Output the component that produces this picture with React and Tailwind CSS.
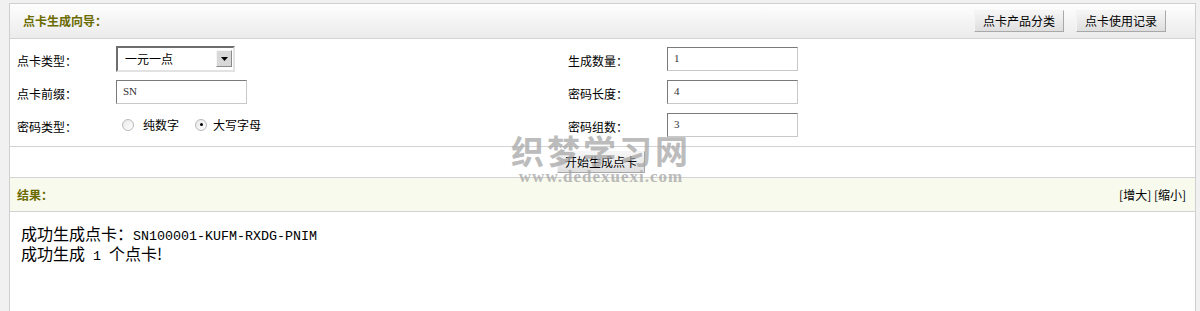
import React from "react";

const cjk = { fontFamily: '"Noto Sans CJK SC", "Liberation Sans", sans-serif' };
const serif = { fontFamily: '"Liberation Serif", "Noto Sans CJK SC", serif' };
const mono = { fontFamily: '"Liberation Mono", monospace' };

function GrayButton({ children, className = "" }) {
  return (
    <button
      className={`h-[22px] border border-t-[#f4f4f4] border-l-[#f4f4f4] border-r-[#a8a8a8] border-b-[#a8a8a8] bg-gradient-to-b from-[#f6f6f6] to-[#dedede] text-[12px] leading-none text-black ${className}`}
      style={cjk}
    >
      {children}
    </button>
  );
}

function TextBox({ value }) {
  return (
    <div
      className="flex h-[24px] w-[131px] items-center border border-t-[#7a7a7a] border-l-[#7a7a7a] border-r-[#c8c8c8] border-b-[#c8c8c8] bg-white px-[6px] text-[11px] text-[#333]"
      style={serif}
    >
      {value}
    </div>
  );
}

function Label({ children }) {
  return (
    <span className="text-[12px] text-black" style={cjk}>
      {children}
    </span>
  );
}

function Radio({ checked }) {
  return (
    <span className="relative inline-block h-[12px] w-[12px] rounded-full border border-[#b9b9b9] bg-gradient-to-br from-[#e8e8e8] to-white">
      {checked && (
        <span className="absolute left-[3.5px] top-[3.5px] h-[3px] w-[3px] rounded-full bg-black" />
      )}
    </span>
  );
}

export default function App() {
  return (
    <div className="h-[311px] w-[1200px] overflow-hidden bg-[#f1f1f1] pl-[9px] pr-[4px] pt-[3px]" style={cjk}>
      <div className="relative h-[320px] border border-[#cfcfcf] bg-white">
        {/* header */}
        <div className="flex h-[35px] items-center justify-between border-b border-[#d3d3d3] bg-gradient-to-b from-[#fefefe] to-[#ebebeb] pl-[13px] pr-[29px]">
          <span className="text-[12px] font-bold text-[#6b6b00]">点卡生成向导：</span>
          <div className="flex gap-[12px] pb-[1px]">
            <GrayButton className="w-[90px]">点卡产品分类</GrayButton>
            <GrayButton className="w-[90px]">点卡使用记录</GrayButton>
          </div>
        </div>

        {/* form */}
        <div className="border-b border-[#d3d3d3] pb-[5px] pl-[7px] pt-[3px]">
          <div className="flex h-[33px] items-center">
            <div className="flex w-[551px] items-center">
              <div className="w-[99px]"><Label>点卡类型：</Label></div>
              <div className="flex h-[26px] w-[119px] items-center justify-between border-2 border-t-[#6e6e6e] border-l-[#6e6e6e] border-r-[#e2e2e2] border-b-[#e2e2e2] bg-white pl-[7px] pr-[1px]">
                <span className="text-[12px] text-black">一元一点</span>
                <span className="flex h-[17px] w-[16px] items-center justify-center border border-t-[#f6f6f6] border-l-[#f6f6f6] border-r-[#8a8a8a] border-b-[#8a8a8a] bg-[#d8d8d8]">
                  <svg width="7" height="4" viewBox="0 0 7 4">
                    <path d="M0 0h7L3.5 4z" fill="#000" />
                  </svg>
                </span>
              </div>
            </div>
            <div className="w-[99px]"><Label>生成数量：</Label></div>
            <TextBox value="1" />
          </div>
          <div className="flex h-[33px] items-center">
            <div className="flex w-[551px] items-center">
              <div className="w-[99px]"><Label>点卡前缀：</Label></div>
              <TextBox value="SN" />
            </div>
            <div className="w-[99px]"><Label>密码长度：</Label></div>
            <TextBox value="4" />
          </div>
          <div className="flex h-[33px] items-center">
            <div className="flex w-[551px] items-center">
              <div className="w-[99px]"><Label>密码类型：</Label></div>
              <div className="flex items-center pl-[6px]">
                <Radio />
                <span className="ml-[9px] mr-[16px] text-[12px] text-black">纯数字</span>
                <Radio checked />
                <span className="ml-[6px] text-[12px] text-black">大写字母</span>
              </div>
            </div>
            <div className="w-[99px]"><Label>密码组数：</Label></div>
            <TextBox value="3" />
          </div>
        </div>

        {/* submit */}
        <div className="flex h-[31px] items-center justify-center border-b border-[#d3d3d3] pr-[3px]">
          <GrayButton className="w-[88px]">开始生成点卡</GrayButton>
        </div>

        {/* result header */}
        <div className="flex h-[34px] items-center justify-between border-b border-[#d3d3d3] bg-[#f8faee] pl-[7px] pr-[9px]">
          <span className="text-[12px] font-bold text-[#6b6b00]">结果：</span>
          <span className="text-[12px] text-black">[增大] [缩小]</span>
        </div>

        {/* result body */}
        <div className="pl-[11px] pt-[13px] text-[16px] leading-[17px] text-black">
          <div>
            成功生成点卡：<span className="text-[13.33px]" style={mono}>SN100001-KUFM-RXDG-PNIM</span>
          </div>
          <div>
            成功生成<span className="whitespace-pre text-[13.33px]" style={mono}> 1 </span>个点卡!
          </div>
        </div>

        {/* watermark */}
        <div className="pointer-events-none absolute left-[500px] top-[126px] flex w-[182px] flex-col items-center text-[#a6a6a6] opacity-75">
          <span className="text-[33px] font-bold leading-[40px] tracking-[3px]" style={cjk}>
            织梦学习网
          </span>
          <span className="text-[17px] font-bold leading-[14px] tracking-[1px]" style={serif}>www.dedexuexi.com</span>
        </div>
      </div>
    </div>
  );
}
